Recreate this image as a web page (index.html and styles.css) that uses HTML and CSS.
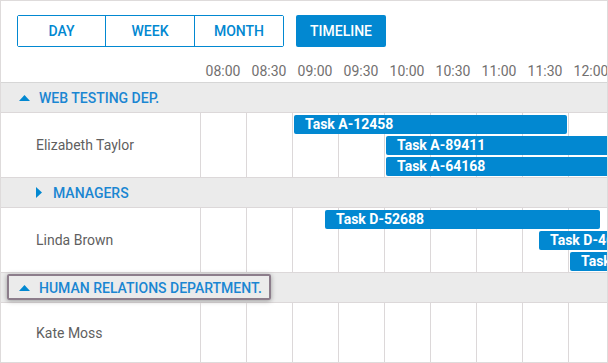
FILE: index.html
```html
<!DOCTYPE html>
<html lang="en">
<head>
  <meta charset="UTF-8" />
  <meta name="viewport" content="width=device-width, initial-scale=1.0"/>
  <title>timeline scheduler</title>
  <link rel="stylesheet" href="styles.css">
</head>
<body>
  <div class="scheduler">
    <div class="toolbar">
      <div class="tabs">
        <button class="tab tab-day">DAY</button>
        <button class="tab">WEEK</button>
        <button class="tab">MONTH</button>
      </div>
      <button class="tab active">TIMELINE</button>
    </div>

    <div class="row header">
      <div class="label"></div>
      <div class="track">
        <div class="cell">08:00</div>
        <div class="cell">08:30</div>
        <div class="cell">09:00</div>
        <div class="cell">09:30</div>
        <div class="cell">10:00</div>
        <div class="cell">10:30</div>
        <div class="cell">11:00</div>
        <div class="cell">11:30</div>
        <div class="cell">12:00</div>
      </div>
    </div>

    <div class="row section">
      <span class="toggle"><svg width="11" height="6" viewBox="0 0 11 6"><path d="M0 6 L5.5 0 L11 6 Z" fill="#0288d1"/></svg></span>
      <span class="section-name">WEB TESTING DEP.</span>
    </div>

    <div class="row person">
      <div class="label">Elizabeth Taylor</div>
      <div class="track">
        <div class="cell"></div><div class="cell"></div><div class="cell"></div>
        <div class="cell"></div><div class="cell"></div><div class="cell"></div>
        <div class="cell"></div><div class="cell"></div><div class="cell"></div>
        <div class="event lane-1" style="left: 94px; width: 273px;">Task A-12458</div>
        <div class="event lane-2" style="left: 186px; width: 240px;">Task A-89411</div>
        <div class="event lane-3" style="left: 186px; width: 240px;">Task A-64168</div>
      </div>
    </div>

    <div class="row section sub">
      <span class="toggle"><svg width="6" height="11" viewBox="0 0 6 11"><path d="M0 0 L6 5.5 L0 11 Z" fill="#0288d1"/></svg></span>
      <span class="section-name">MANAGERS</span>
    </div>

    <div class="row person">
      <div class="label">Linda Brown</div>
      <div class="track">
        <div class="cell"></div><div class="cell"></div><div class="cell"></div>
        <div class="cell"></div><div class="cell"></div><div class="cell"></div>
        <div class="cell"></div><div class="cell"></div><div class="cell"></div>
        <div class="event lane-1" style="left: 125px; width: 275px;">Task D-52688</div>
        <div class="event lane-2" style="left: 339px; width: 120px;">Task D-46210</div>
        <div class="event lane-3" style="left: 370px; width: 120px;">Task D-71305</div>
      </div>
    </div>

    <div class="row section">
      <span class="toggle"><svg width="11" height="6" viewBox="0 0 11 6"><path d="M0 6 L5.5 0 L11 6 Z" fill="#0288d1"/></svg></span>
      <span class="section-name">HUMAN RELATIONS DEPARTMENT.</span>
      <div class="highlight"></div>
    </div>

    <div class="row person last">
      <div class="label">Kate Moss</div>
      <div class="track">
        <div class="cell"></div><div class="cell"></div><div class="cell"></div>
        <div class="cell"></div><div class="cell"></div><div class="cell"></div>
        <div class="cell"></div><div class="cell"></div><div class="cell"></div>
      </div>
    </div>
  </div>
</body>
</html>
```

FILE: styles.css
```css
html, body {
  margin: 0;
  padding: 0;
  background: #fff;
}

body {
  font-family: Roboto, "Liberation Sans", sans-serif;
}

.scheduler {
  width: 608px;
  height: 363px;
  box-sizing: border-box;
  border: 1px solid #dedbdb;
  overflow: hidden;
  background: #fff;
}

.toolbar {
  display: flex;
  gap: 12px;
  height: 58px;
  box-sizing: border-box;
  padding: 14px 0 0 16px;
}

.tabs {
  display: flex;
  border: 1px solid #0288d1;
  border-radius: 2px;
  height: 32px;
  box-sizing: border-box;
}

.tab {
  font-family: inherit;
  font-size: 14px;
  font-weight: 500;
  color: #0288d1;
  background: #fff;
  border: none;
  border-left: 1px solid #0288d1;
  padding: 0;
  width: 89px;
  height: 30px;
  cursor: pointer;
}

.tab-day {
  border-left: none;
  width: 87px;
}

.tab.active {
  background: #0288d1;
  color: #fff;
  border: none;
  border-radius: 2px;
  width: 90px;
  height: 32px;
}

.row {
  display: flex;
  border-bottom: 1px solid #dcd8d9;
}

.label {
  width: 199px;
  flex: none;
  box-sizing: border-box;
  padding-left: 35px;
  display: flex;
  align-items: center;
  font-size: 14px;
  color: #5f5f5f;
}

.track {
  position: relative;
  display: flex;
  flex: none;
}

.cell {
  width: 46px;
  flex: none;
  box-sizing: border-box;
  border-left: 1px solid #dcd8d9;
}

.header {
  height: 23px;
  border-bottom-color: #d6d6d6;
}

.header .cell {
  border-left: none;
  text-align: center;
  font-size: 14px;
  line-height: 25px;
  color: #727070;
}

.section {
  position: relative;
  height: 29px;
  align-items: center;
  background: #ebebeb;
  padding-left: 18px;
}

.section.sub {
  padding-left: 35px;
}

.toggle {
  display: flex;
  width: 20px;
}

.section.sub .toggle {
  width: 17px;
}

.section-name {
  font-size: 14px;
  font-weight: 500;
  color: #1a86d2;
}

.highlight {
  position: absolute;
  left: 6px;
  top: 1px;
  width: 264px;
  height: 26px;
  box-sizing: border-box;
  border: 2px solid #8c7d8b;
  border-radius: 2px;
  box-shadow: 0 1px 5px rgba(0, 0, 0, 0.35);
}

.person {
  height: 64px;
}

.person .cell {
  height: 64px;
}

.person.last {
  height: 59px;
  border-bottom: none;
}

.person.last .cell {
  height: 59px;
}

.event {
  position: absolute;
  height: 19px;
  box-sizing: border-box;
  padding-left: 11px;
  background: #0288d1;
  border-radius: 2px;
  color: #fff;
  font-size: 14px;
  font-weight: 700;
  line-height: 19px;
  white-space: nowrap;
  overflow: hidden;
}

.lane-1 { top: 2px; }
.lane-2 { top: 23px; }
.lane-3 { top: 44px; }
```
